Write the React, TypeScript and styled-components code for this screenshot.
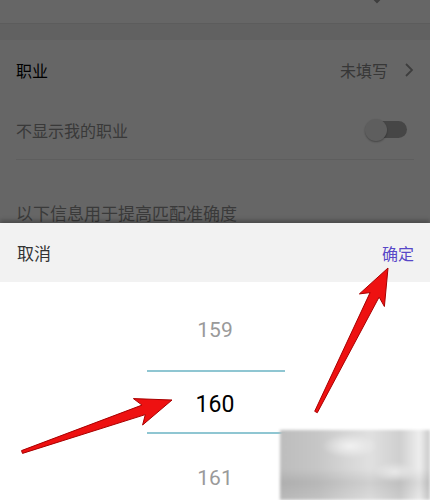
import React from "react";
import styled, { createGlobalStyle } from "styled-components";

const GlobalStyle = createGlobalStyle`
  html, body {
    margin: 0;
    padding: 0;
    background: #ffffff;
  }
  body {
    font-family: "Noto Sans CJK SC", "Noto Sans", Roboto, sans-serif;
  }
`;

const Screen = styled.div`
  position: relative;
  width: 430px;
  height: 500px;
  overflow: hidden;
  background: #ffffff;
`;

/* ---------- page underneath the mask ---------- */

const Page = styled.div`
  display: flex;
  flex-direction: column;
`;

const TopStrip = styled.div`
  height: 23px;
  border-bottom: 1px solid #e6e6e6;
  display: flex;
  justify-content: flex-end;
  padding-right: 46px;
`;

const Gap = styled.div`
  height: 16px;
  background: #f2f2f2;
`;

const Row = styled.div<{ $h: number; $divider?: boolean }>`
  height: ${(p) => p.$h}px;
  margin: 0 16px;
  display: flex;
  align-items: center;
  justify-content: space-between;
  border-bottom: ${(p) => (p.$divider ? "1px solid #ececec" : "none")};
`;

const Label = styled.span<{ $dark?: boolean }>`
  font-size: 16px;
  color: ${(p) => (p.$dark ? "#000000" : "#8f8f8f")};
`;

const Value = styled.span`
  display: flex;
  align-items: center;
  gap: 16px;
  font-size: 16px;
  color: #8a8a8a;
`;

const Toggle = styled.span`
  position: relative;
  width: 42px;
  height: 24px;
  margin-right: 7px;
  display: flex;
  align-items: center;

  &::before {
    content: "";
    position: absolute;
    left: 5px;
    right: 0;
    height: 17px;
    border-radius: 9px;
    background: #b0b0b0;
  }
  &::after {
    content: "";
    position: absolute;
    left: 0;
    width: 22px;
    height: 22px;
    border-radius: 50%;
    background: #ececec;
    box-shadow: 0 1px 2px rgba(0, 0, 0, 0.35);
  }
`;

const InfoSection = styled.div`
  padding: 40px 16px 0;
  font-size: 17px;
  color: #929292;
`;

const Mask = styled.div`
  position: absolute;
  inset: 0;
  background: rgba(0, 0, 0, 0.6);
`;

/* ---------- bottom sheet ---------- */

const Sheet = styled.div`
  position: absolute;
  left: 0;
  right: 0;
  top: 223px;
  bottom: 0;
  display: flex;
  flex-direction: column;
  background: #ffffff;
  box-shadow: 0 -3px 4px rgba(0, 0, 0, 0.25);
`;

const SheetHeader = styled.div`
  height: 59px;
  flex-shrink: 0;
  background: #f2f2f2;
  display: flex;
  align-items: center;
  justify-content: space-between;
  padding: 0 16px 0 17px;
`;

const HeaderButton = styled.span<{ $primary?: boolean }>`
  font-size: ${(p) => (p.$primary ? 16 : 17)}px;
  color: ${(p) => (p.$primary ? "#5848c8" : "#333333")};
`;

const Picker = styled.div`
  position: relative;
  flex: 1;
  padding-top: 11px;
  display: flex;
  flex-direction: column;
  align-items: center;
`;

const PickerItem = styled.div<{ $selected?: boolean }>`
  height: 74px;
  flex-shrink: 0;
  display: flex;
  align-items: center;
  justify-content: center;
  font-family: Roboto, "Noto Sans", sans-serif;
  font-size: ${(p) => (p.$selected ? 23 : 21)}px;
  color: ${(p) => (p.$selected ? "#000000" : "#9a9a9a")};
`;

const PickerLine = styled.div<{ $top: number }>`
  position: absolute;
  top: ${(p) => p.$top}px;
  left: 147px;
  width: 138px;
  height: 2px;
  background: #8fc6d2;
`;

const Watermark = styled.div`
  position: absolute;
  left: 280px;
  top: 430px;
  width: 150px;
  height: 70px;
  background:
    radial-gradient(ellipse 28px 12px at 70px 16px, rgba(245, 245, 245, 0.9), transparent),
    radial-gradient(ellipse 22px 10px at 115px 42px, rgba(240, 240, 240, 0.8), transparent),
    linear-gradient(180deg, rgba(0, 0, 0, 0) 0%, rgba(0, 0, 0, 0) 55%, rgba(0, 0, 0, 0.08) 75%, rgba(0, 0, 0, 0.02) 100%),
    linear-gradient(90deg, #bdbdbd 0%, #c6c6c6 25%, #d6d6d6 45%, #e0e0e0 60%, #cfcfcf 80%, #eeeeee 93%, #c8c8c8 100%);
  filter: blur(1.5px);
`;

const Annotations = styled.svg`
  position: absolute;
  inset: 0;
  pointer-events: none;
`;

function Chevron() {
  return (
    <svg width="14" height="8" viewBox="0 0 14 8" style={{ marginTop: -3 }}>
      <path d="M2 0 L7 5 L12 0" fill="none" stroke="#9a9a9a" strokeWidth="2" />
    </svg>
  );
}

function RightArrow() {
  return (
    <svg width="10" height="16" viewBox="0 0 10 16">
      <path d="M2 2 L8 8 L2 14" fill="none" stroke="#9a9a9a" strokeWidth="1.8" />
    </svg>
  );
}

// builds a tapered annotation arrow from tail to tip
function arrowPoints(tx: number, ty: number, hx: number, hy: number) {
  const dx = hx - tx;
  const dy = hy - ty;
  const len = Math.hypot(dx, dy);
  const ux = dx / len;
  const uy = dy / len;
  const nx = -uy;
  const ny = ux;
  const headLen = 36;
  const headHalf = 14;
  const bx = hx - ux * headLen;
  const by = hy - uy * headLen;
  const ix = bx + ux * 6;
  const iy = by + uy * 6;
  const pts = [
    [tx + nx * 1.5, ty + ny * 1.5],
    [ix + nx * 5, iy + ny * 5],
    [bx + nx * headHalf, by + ny * headHalf],
    [hx, hy],
    [bx - nx * headHalf, by - ny * headHalf],
    [ix - nx * 5, iy - ny * 5],
    [tx - nx * 1.5, ty - ny * 1.5],
  ];
  return pts.map((p) => p.map((v) => v.toFixed(1)).join(",")).join(" ");
}

export default function App() {
  return (
    <Screen>
      <GlobalStyle />
      <Page>
        <TopStrip>
          <Chevron />
        </TopStrip>
        <Gap />
        <Row $h={60}>
          <Label $dark>职业</Label>
          <Value>
            未填写
            <RightArrow />
          </Value>
        </Row>
        <Row $h={59} $divider>
          <Label>不显示我的职业</Label>
          <Toggle />
        </Row>
        <InfoSection>以下信息用于提高匹配准确度</InfoSection>
      </Page>
      <Mask />
      <Sheet>
        <SheetHeader>
          <HeaderButton>取消</HeaderButton>
          <HeaderButton $primary>确定</HeaderButton>
        </SheetHeader>
        <Picker>
          <PickerItem>159</PickerItem>
          <PickerItem $selected>160</PickerItem>
          <PickerItem>161</PickerItem>
          <PickerLine $top={88} />
          <PickerLine $top={150} />
        </Picker>
      </Sheet>
      <Watermark />
      <Annotations width="430" height="500" viewBox="0 0 430 500">
        <polygon
          points={arrowPoints(22, 452, 172, 400)}
          fill="#ee1111"
          stroke="#a80000"
          strokeWidth="1"
          strokeLinejoin="round"
        />
        <polygon
          points={arrowPoints(316, 412, 388, 268)}
          fill="#ee1111"
          stroke="#a80000"
          strokeWidth="1"
          strokeLinejoin="round"
        />
      </Annotations>
    </Screen>
  );
}
